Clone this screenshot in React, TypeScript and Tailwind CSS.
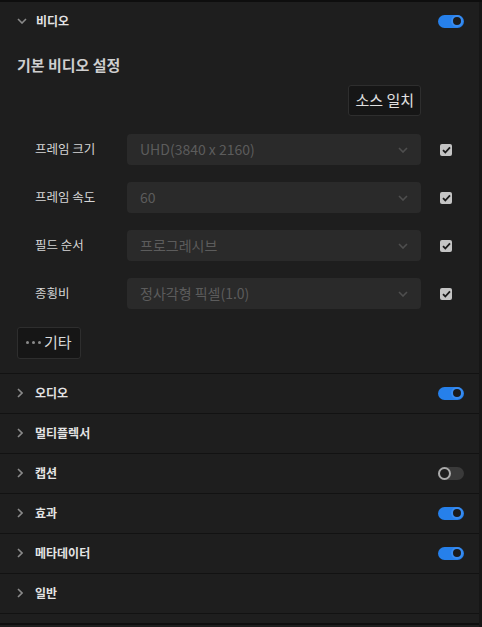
import React from "react";

const font = { fontFamily: '"Noto Sans CJK KR", "Noto Sans", sans-serif' };

const Toggle = ({ on }: { on: boolean }) =>
  on ? (
    <div className="w-[26px] h-[13px] rounded-full bg-[#2680eb] flex items-center justify-end pr-[1px]">
      <div className="w-[12px] h-[12px] rounded-full bg-[#1b1b1b] border-2 border-[#3a8cf0]" />
    </div>
  ) : (
    <div className="w-[26px] h-[13px] rounded-full bg-[#3a3a3a] flex items-center justify-start">
      <div className="w-[13px] h-[13px] rounded-full bg-[#1e1e1e] border-2 border-[#aaaaaa]" />
    </div>
  );

const ChevronRight = () => (
  <svg width="6" height="10" viewBox="0 0 6 10" fill="none">
    <path d="M1 1l4 4-4 4" stroke="#8a8a8a" strokeWidth="1.6" />
  </svg>
);

const ChevronDown = ({ color = "#8a8a8a" }: { color?: string }) => (
  <svg width="10" height="6" viewBox="0 0 10 6" fill="none">
    <path d="M1 1l4 4 4-4" stroke={color} strokeWidth="1.6" />
  </svg>
);

const Checkbox = () => (
  <div className="w-[12px] h-[12px] rounded-[2px] bg-[#c4c4c4] flex items-center justify-center">
    <svg width="9" height="8" viewBox="0 0 9 8" fill="none">
      <path d="M1 4.2l2.3 2.3L8 1.3" stroke="#1a1a1a" strokeWidth="1.8" />
    </svg>
  </div>
);

const rows = [
  { label: "프레임 크기", value: "UHD(3840 x 2160)" },
  { label: "프레임 속도", value: "60" },
  { label: "필드 순서", value: "프로그레시브" },
  { label: "종횡비", value: "정사각형 픽셀(1.0)" },
];

const sections: { name: string; toggle?: boolean }[] = [
  { name: "오디오", toggle: true },
  { name: "멀티플렉서" },
  { name: "캡션", toggle: false },
  { name: "효과", toggle: true },
  { name: "메타데이터", toggle: true },
  { name: "일반" },
];

export default function App() {
  return (
    <div className="w-[482px] h-[627px] bg-[#1e1e1e] overflow-hidden flex flex-col" style={font}>
      <div className="h-[2px] bg-[#0e0e0e]" />
      <div className="flex-1 flex min-h-0">
        <div className="flex-1 min-w-0 flex flex-col">
          {/* video header */}
          <div className="h-[38px] flex items-center pl-[17px] pr-[15px]">
            <ChevronDown />
            <span className="ml-[9px] text-[12px] font-bold text-[#e4e4e4]">비디오</span>
            <div className="ml-auto">
              <Toggle on />
            </div>
          </div>

          <div className="flex flex-col pl-[17px] pr-[27px] pt-[14px] pb-[14px] border-b border-[#121212]">
            <div className="text-[15px] font-bold text-[#cfcfcf] leading-[22px]">기본 비디오 설정</div>
            <div className="flex justify-end mt-[9px] pr-[31px]">
              <div className="h-[31px] px-[6px] flex items-center rounded-[3px] bg-[#161616] border border-[#2e2e2e] text-[15px] text-[#e0e0e0]">
                소스 일치
              </div>
            </div>
            <div className="flex flex-col gap-[17px] mt-[18px]">
              {rows.map((r) => (
                <div key={r.label} className="flex items-center">
                  <div className="w-[110px] pl-[18px] text-[12.5px] text-[#d6d6d6]">{r.label}</div>
                  <div className="w-[294px] h-[31px] rounded-[4px] bg-[#2a2a2a] flex items-center pl-[13px] pr-[13px]">
                    <span className="text-[14px] text-[#5c5c5c]">{r.value}</span>
                    <div className="ml-auto">
                      <ChevronDown color="#4e4e4e" />
                    </div>
                  </div>
                  <div className="ml-[19px]">
                    <Checkbox />
                  </div>
                </div>
              ))}
            </div>
            <div className="mt-[16px]">
              <div className="inline-flex items-center h-[32px] px-[8px] rounded-[3px] bg-[#161616] border border-[#2e2e2e]">
                <span className="flex gap-[3px] mr-[3px]">
                  <span className="w-[3px] h-[3px] rounded-full bg-[#8a8a8a]" />
                  <span className="w-[3px] h-[3px] rounded-full bg-[#8a8a8a]" />
                  <span className="w-[3px] h-[3px] rounded-full bg-[#8a8a8a]" />
                </span>
                <span className="text-[15px] text-[#dadada]">기타</span>
              </div>
            </div>
          </div>

          {sections.map((s) => (
            <div key={s.name} className="h-[40px] flex items-center pl-[17px] pr-[15px] border-b border-[#121212]">
              <ChevronRight />
              <span className="ml-[12px] text-[12px] font-bold text-[#e4e4e4]">{s.name}</span>
              {s.toggle !== undefined && (
                <div className="ml-auto">
                  <Toggle on={s.toggle} />
                </div>
              )}
            </div>
          ))}
          <div className="h-[9px]" />
          <div className="h-[2px] bg-[#0e0e0e]" />
        </div>
        <div className="w-[3px] bg-[#161616]" />
      </div>
    </div>
  );
}
